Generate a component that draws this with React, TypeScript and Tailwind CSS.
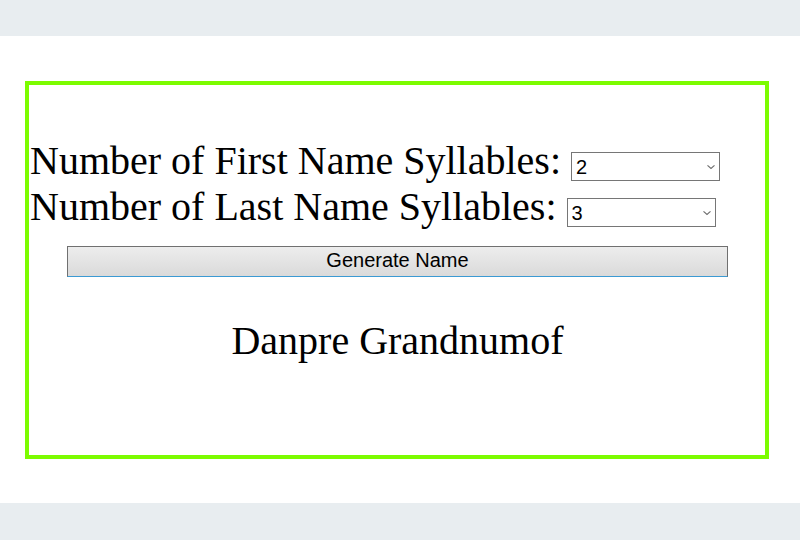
import React from "react";

function Chevron() {
  return (
    <svg
      className="pointer-events-none absolute right-[5px] top-1/2 -translate-y-1/2"
      width="8"
      height="5"
      viewBox="0 0 8 5"
      fill="none"
    >
      <path d="M0.5 0.8 L4 4 L7.5 0.8" stroke="#6d6d6d" strokeWidth="1.1" />
    </svg>
  );
}

function Sel({ value }: { value: string }) {
  return (
    <span className="relative inline-block align-baseline leading-normal">
      <select
        defaultValue={value}
        className="appearance-none block w-[149px] h-[29px] border border-[#767676] bg-white pl-[4px] pt-[2px] pb-0 text-[20px] leading-[23px] text-black outline-none rounded-none"
        style={{ fontFamily: '"Liberation Sans", Arial, sans-serif' }}
      >
        <option value="1">1</option>
        <option value="2">2</option>
        <option value="3">3</option>
        <option value="4">4</option>
      </select>
      <Chevron />
    </span>
  );
}

export default function App() {
  return (
    <div className="w-[800px] h-[540px] bg-[#e8edf0] pt-[36px]">
      <div className="h-[467px] bg-white pt-[45px] px-[25px]">
        <div
          className="h-[378px] w-[744px] border-[4px] border-[#7cfc00] pt-[53px] pl-[1px] text-black"
          style={{ fontFamily: '"Liberation Serif", "Times New Roman", serif' }}
        >
          <div className="text-[40px] leading-[46px] whitespace-nowrap">
            Number of First Name Syllables: <Sel value="2" />
          </div>
          <div className="text-[40px] leading-[46px] whitespace-nowrap">
            Number of Last Name Syllables: <Sel value="3" />
          </div>
          <button
            className="block mx-auto mt-[16px] w-[661px] h-[31px] border border-[#707070] border-b-[#3c9ad3] bg-gradient-to-b from-[#ededed] to-[#dadada] pb-[3px] text-[20px] leading-[24px] text-black"
            style={{ fontFamily: '"Liberation Sans", Arial, sans-serif' }}
          >
            Generate Name
          </button>
          <div className="mt-[41px] text-center text-[40px] leading-[46px]">
            Danpre Grandnumof
          </div>
        </div>
      </div>
    </div>
  );
}
